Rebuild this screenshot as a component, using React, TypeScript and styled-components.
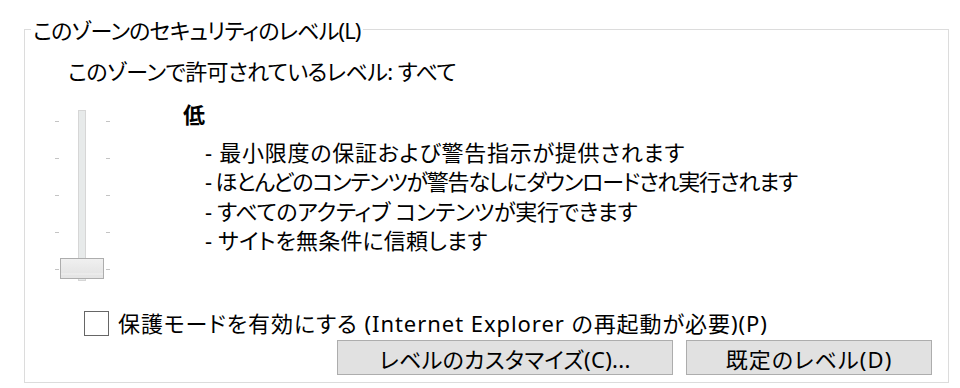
import React from "react";
import styled, { createGlobalStyle } from "styled-components";

const Global = createGlobalStyle`
  html, body { margin: 0; padding: 0; background: #ffffff; }
  body {
    font-family: "Noto Sans", "Noto Sans CJK JP", sans-serif;
    font-feature-settings: "palt";
    font-size: 22px;
    color: #000000;
    width: 960px;
    height: 388px;
    overflow: hidden;
  }
`;

const Group = styled.fieldset`
  box-sizing: border-box;
  width: 925px;
  margin: 17px 0 0 24px;
  padding: 0 16px 7px 0;
  border: 1px solid #dcdcdc;
  min-width: 0;
`;

const Legend = styled.legend`
  margin-left: 6px;
  padding: 0 2px;
  line-height: 24px;
  letter-spacing: -0.85px;
  position: relative;
  top: 1px;
`;

const Allowed = styled.div`
  margin: 16px 0 0 43px;
  line-height: 28px;
  letter-spacing: -0.6px;
`;

const LevelRow = styled.div`
  display: flex;
  align-items: flex-start;
  margin-top: 15px;
`;

const Slider = styled.div`
  position: relative;
  display: flex;
  height: 171px;
  margin: 10px 0 0 30px;
`;

const TickColumn = styled.div<{ $gap: number }>`
  display: flex;
  flex-direction: column;
  justify-content: space-between;
  width: 4px;
  padding: 11px 0;
  margin-left: ${(p) => p.$gap}px;
  box-sizing: border-box;
`;

const Tick = styled.div`
  height: 1px;
  background: #c4c4c4;
`;

const Track = styled.div`
  box-sizing: border-box;
  width: 8px;
  margin-left: 19px;
  background: #e7eaea;
  border: 1px solid #d6d6d6;
`;

const Thumb = styled.div`
  position: absolute;
  left: 5px;
  top: 148px;
  box-sizing: border-box;
  width: 44px;
  height: 21px;
  border: 1px solid #adadad;
  background: linear-gradient(#f0f0f0, #e5e5e5 75%, #f3f3f3 78%, #e5e5e5 84%);
`;

const Description = styled.div`
  margin-left: 73px;
`;

const LevelName = styled.div`
  font-weight: 700;
  line-height: 28px;
`;

const Bullets = styled.ul`
  list-style: none;
  margin: 10px 0 0 22px;
  padding: 0;
`;

const Bullet = styled.li<{ $ls: number }>`
  line-height: 29.3px;
  white-space: nowrap;
  letter-spacing: ${(p) => p.$ls}px;
`;

const CheckRow = styled.label`
  display: flex;
  align-items: center;
  gap: 9px;
  margin: 28px 0 0 59px;
  line-height: 28px;
  letter-spacing: 0.95px;
`;

const Box = styled.span`
  box-sizing: border-box;
  width: 25px;
  height: 25px;
  border: 1px solid #666666;
  background: #ffffff;
`;

const Buttons = styled.div`
  display: flex;
  justify-content: flex-end;
  gap: 13px;
  margin-top: 3px;
`;

const Button = styled.button<{ $w: number; $ls: number }>`
  box-sizing: border-box;
  width: ${(p) => p.$w}px;
  height: 35px;
  padding: 0;
  border: 1px solid #adadad;
  background: #e1e1e1;
  font-family: inherit;
  font-feature-settings: "palt";
  font-size: 22px;
  letter-spacing: ${(p) => p.$ls}px;
  color: #000000;
`;

const bullets: [string, number][] = [
  ["- 最小限度の保証および警告指示が提供されます", 0.75],
  ["- ほとんどのコンテンツが警告なしにダウンロードされ実行されます", -1.2],
  ["- すべてのアクティブ コンテンツが実行できます", -0.3],
  ["- サイトを無条件に信頼します", 0.15],
];

export default function App() {
  return (
    <>
      <Global />
      <Group>
        <Legend>このゾーンのセキュリティのレベル(L)</Legend>
        <Allowed>このゾーンで許可されているレベル: すべて</Allowed>
        <LevelRow>
          <Slider>
            <TickColumn $gap={0}>
              {[0, 1, 2, 3, 4].map((i) => (
                <Tick key={i} />
              ))}
            </TickColumn>
            <Track />
            <TickColumn $gap={20}>
              {[0, 1, 2, 3, 4].map((i) => (
                <Tick key={i} />
              ))}
            </TickColumn>
            <Thumb />
          </Slider>
          <Description>
            <LevelName>低</LevelName>
            <Bullets>
              {bullets.map(([b, ls]) => (
                <Bullet key={b} $ls={ls}>
                  {b}
                </Bullet>
              ))}
            </Bullets>
          </Description>
        </LevelRow>
        <CheckRow>
          <Box />
          保護モードを有効にする (Internet Explorer の再起動が必要)(P)
        </CheckRow>
        <Buttons>
          <Button $w={336} $ls={0.3}>
            レベルのカスタマイズ(C)...
          </Button>
          <Button $w={246} $ls={1.1}>
            既定のレベル(D)
          </Button>
        </Buttons>
      </Group>
    </>
  );
}
